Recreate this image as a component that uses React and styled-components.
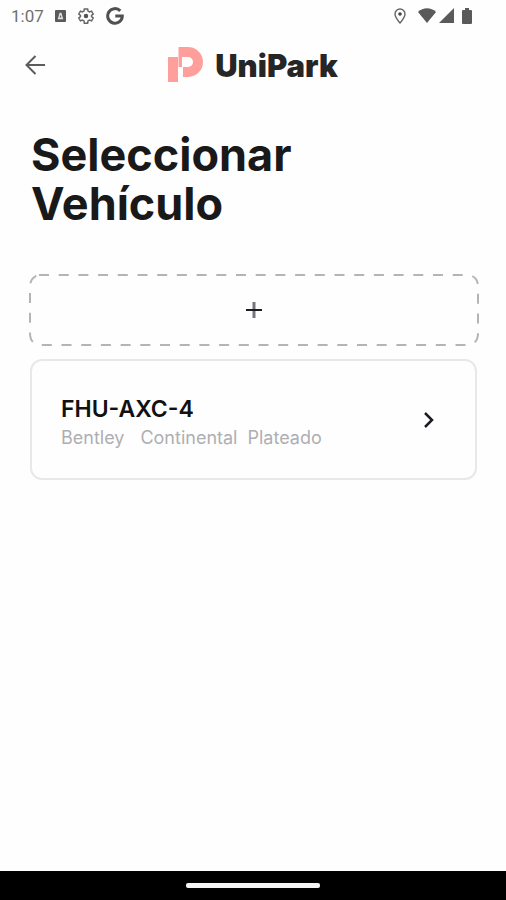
import React from 'react';
import styled, { createGlobalStyle } from 'styled-components';

const GlobalStyle = createGlobalStyle`
  * {
    box-sizing: border-box;
  }

  body {
    margin: 0;
    background: #fefefe;
    font-family: Inter, Roboto, sans-serif;
  }

  svg {
    display: block;
  }
`;

const Screen = styled.div`
  display: flex;
  flex-direction: column;
  min-height: 100vh;
`;

const StatusBar = styled.div`
  display: flex;
  justify-content: space-between;
  align-items: center;
  height: 31px;
  padding: 0 34px 0 11px;
  color: #5a5a5a;
`;

const StatusGroup = styled.div`
  display: flex;
  align-items: center;
  gap: ${({ $gap }) => $gap}px;
`;

const Clock = styled.span`
  width: 33px;
  color: #707070;
  font-family: Roboto, sans-serif;
  font-size: 17px;
  line-height: 20px;
`;

const Header = styled.header`
  display: grid;
  grid-template-columns: 1fr auto 1fr;
  align-items: center;
  height: 67px;
  padding: 0 24px;
`;

const IconButton = styled.button`
  justify-self: start;
  padding: 0;
  border: 0;
  background: none;
  color: #5c5c5c;
  cursor: pointer;
`;

const Brand = styled.div`
  display: flex;
  align-items: center;
  gap: 12px;
`;

const BrandName = styled.span`
  padding-top: 2px;
  color: #262626;
  font-size: 31px;
  font-weight: 900;
  line-height: 36px;
`;

const Content = styled.main`
  flex: 1;
  display: flex;
  flex-direction: column;
  padding: 32px 27px 32px 29px;
`;

const Title = styled.h1`
  max-width: 320px;
  margin: 0 0 46px;
  padding-left: 2px;
  color: #191919;
  font-size: 45px;
  font-weight: 700;
  line-height: 49px;
`;

const AddButton = styled.button`
  position: relative;
  display: flex;
  justify-content: center;
  align-items: center;
  width: 100%;
  height: 72px;
  margin-bottom: 13px;
  padding: 0;
  border: 0;
  background: none;
  cursor: pointer;
`;

const DashedOutline = styled.svg`
  position: absolute;
  inset: 0;
  width: 100%;
  height: 100%;
  overflow: visible;
`;

const VehicleCard = styled.button`
  display: flex;
  justify-content: space-between;
  align-items: center;
  height: 121px;
  margin: 0 2px 0 1px;
  padding: 0 36px 0 29px;
  border: 2px solid #e8e8e8;
  border-radius: 12px;
  background: #fefefe;
  color: #1c1b24;
  font-family: inherit;
  text-align: left;
  cursor: pointer;
`;

const VehicleInfo = styled.span`
  display: flex;
  flex-direction: column;
  padding-top: 4px;
`;

const Plate = styled.span`
  color: #111111;
  font-size: 23px;
  font-weight: 600;
  line-height: 32px;
`;

const Details = styled.span`
  display: flex;
  gap: 10px;
  color: #aeaeb2;
  font-size: 18px;
  line-height: 26px;
`;

const Make = styled.span`
  margin-right: 6px;
`;

const NavigationBar = styled.div`
  display: flex;
  justify-content: center;
  align-items: center;
  height: 29px;
  background: #000000;
`;

const HomeIndicator = styled.div`
  width: 134px;
  height: 5px;
  border-radius: 2px;
  background: #f4f4f4;
`;

const vehicles = [
  { plate: 'FHU-AXC-4', make: 'Bentley', model: 'Continental', color: 'Plateado' },
];

const AppBadgeIcon = () => (
  <svg width="11" height="12" viewBox="0 0 12 13">
    <rect width="12" height="13" rx="1" fill="#5a5a5a" />
    <path d="M3 10 L5 3 H7 L9 10 Z" fill="#e4e4e4" />
    <path d="M5 8 L6 5 L7 8 Z" fill="#5a5a5a" />
  </svg>
);

const GearIcon = () => (
  <svg width="18" height="18" viewBox="0 0 24 24" fill="none" stroke="#666666" strokeWidth="2">
    <path d="M9.8 2.5h4.4l.5 2.9 2 1.1 2.7-1 2.2 3.8-2.2 1.8v1.8l2.2 1.8-2.2 3.8-2.7-1-2 1.1-.5 2.9H9.8l-.5-2.9-2-1.1-2.7 1-2.2-3.8 2.2-1.8v-1.8L2.4 9.3l2.2-3.8 2.7 1 2-1.1z" />
    <circle cx="12" cy="12" r="3" fill="#555555" stroke="none" />
  </svg>
);

const GoogleIcon = () => (
  <svg width="18" height="18" viewBox="0 0 18 18" fill="none" stroke="#505050" strokeWidth="3">
    <path d="M14.3 3.9 A7.3 7.3 0 1 0 16.3 9 H9.3" />
  </svg>
);

const LocationIcon = () => (
  <svg width="12" height="16" viewBox="0 0 12 16">
    <path d="M6 1 C3.2 1 1 3.2 1 6 C1 9.2 6 15 6 15 S11 9.2 11 6 C11 3.2 8.8 1 6 1 Z" fill="none" stroke="#666666" strokeWidth="1.4" />
    <circle cx="6" cy="6" r="1.8" fill="#444444" />
  </svg>
);

const WifiIcon = () => (
  <svg width="18" height="15" viewBox="0 0 18 15">
    <path d="M0 4 C5 -1 13 -1 18 4 L9 15 Z" fill="#5a5a5a" />
  </svg>
);

const SignalIcon = () => (
  <svg width="15" height="15" viewBox="0 0 15 15">
    <path d="M15 0 V15 H0 Z" fill="#5a5a5a" />
  </svg>
);

const BatteryIcon = () => (
  <svg width="10" height="16" viewBox="0 0 10 16">
    <path d="M3 0 H7 V2 H9 Q10 2 10 3 V15 Q10 16 9 16 H1 Q0 16 0 15 V3 Q0 2 1 2 H3 Z" fill="#5a5a5a" />
  </svg>
);

const BackIcon = () => (
  <svg width="22" height="22" viewBox="0 0 22 22" fill="none" stroke="currentColor" strokeWidth="2">
    <path d="M21 11 H3 M11.5 2 L2.5 11 L11.5 20" />
  </svg>
);

const BrandMark = () => (
  <svg width="35" height="35" viewBox="0 0 35 35" fill="#ff9f9b">
    <path d="M0 10 H10 V35 H0 Z" />
    <path d="M10.5 0 H20 A15 15 0 0 1 20 30 H15 V20 H20 A5 5 0 0 0 20 10 H14 V20 H10.5 Z" />
  </svg>
);

const PlusIcon = () => (
  <svg width="18" height="18" viewBox="0 0 18 18">
    <path d="M9 1 V17" stroke="#77777b" strokeWidth="3" />
    <path d="M1 9 H17" stroke="#1c1b24" strokeWidth="2" />
  </svg>
);

const ChevronIcon = () => (
  <svg width="20" height="20" viewBox="0 0 20 20" fill="none" stroke="currentColor" strokeWidth="2.5">
    <path d="M6 3 L13 10 L6 17" />
  </svg>
);

const App = () => (
  <>
    <GlobalStyle />
    <Screen>
      <StatusBar>
        <StatusGroup $gap={11}>
          <Clock>1:07</Clock>
          <AppBadgeIcon />
          <GearIcon />
          <GoogleIcon />
        </StatusGroup>
        <StatusGroup $gap={12}>
          <LocationIcon />
          <StatusGroup $gap={8}>
            <StatusGroup $gap={3}>
              <WifiIcon />
              <SignalIcon />
            </StatusGroup>
            <BatteryIcon />
          </StatusGroup>
        </StatusGroup>
      </StatusBar>
      <Header>
        <IconButton type="button" aria-label="Volver">
          <BackIcon />
        </IconButton>
        <Brand>
          <BrandMark />
          <BrandName>UniPark</BrandName>
        </Brand>
      </Header>
      <Content>
        <Title>Seleccionar Vehículo</Title>
        <AddButton type="button" aria-label="Agregar vehículo">
          <DashedOutline viewBox="0 0 450 72" preserveAspectRatio="none">
            <path
              d="M10 1 H437 Q449 1 449 13 V59 Q449 71 437 71 H13 Q1 71 1 59 V13 Q1 3 10 1"
              fill="none"
              stroke="#b4b4b4"
              strokeWidth="2"
              strokeDasharray="10 9.7"
            />
          </DashedOutline>
          <PlusIcon />
        </AddButton>
        {vehicles.map((vehicle) => (
          <VehicleCard key={vehicle.plate} type="button">
            <VehicleInfo>
              <Plate>{vehicle.plate}</Plate>
              <Details>
                <Make>{vehicle.make}</Make>
                <span>{vehicle.model}</span>
                <span>{vehicle.color}</span>
              </Details>
            </VehicleInfo>
            <ChevronIcon />
          </VehicleCard>
        ))}
      </Content>
      <NavigationBar>
        <HomeIndicator />
      </NavigationBar>
    </Screen>
  </>
);

export default App;
